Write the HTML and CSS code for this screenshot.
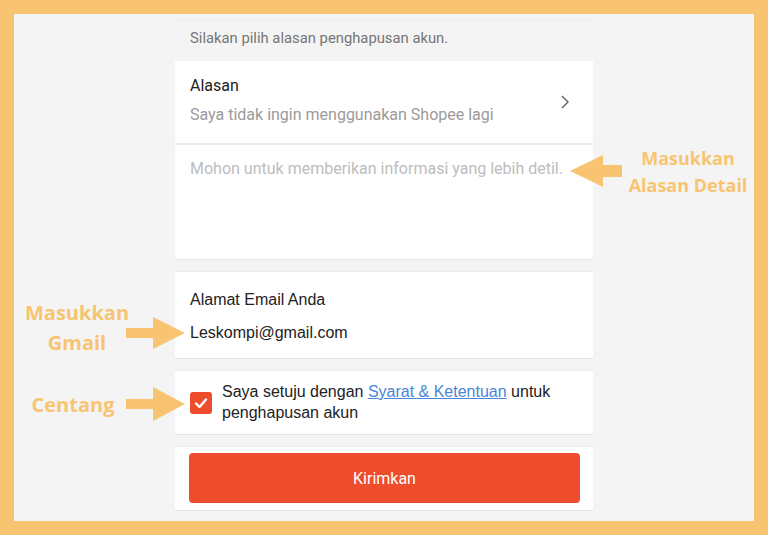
FILE: index.html
```html
<!DOCTYPE html>
<html lang="id">
<head>
<meta charset="utf-8">
<title>Hapus Akun</title>
<link rel="stylesheet" href="styles.css">
</head>
<body>
<div class="stage">
  <div class="frame">
    <div class="panel">
      <div class="hint">Silakan pilih alasan penghapusan akun.</div>
      <div class="card reason">
        <div class="reason-text">
          <div class="label">Alasan</div>
          <div class="value">Saya tidak ingin menggunakan Shopee lagi</div>
        </div>
        <svg class="chevron" width="12" height="16" viewBox="0 0 12 16"><polyline points="3,2 9,8 3,14" fill="none" stroke="#5f5f66" stroke-width="1.4"/></svg>
      </div>
      <div class="card detail">
        <div class="placeholder">Mohon untuk memberikan informasi yang lebih detil.</div>
      </div>
      <div class="card email">
        <div class="email-label">Alamat Email Anda</div>
        <div class="email-value">Leskompi@gmail.com</div>
      </div>
      <div class="card agree">
        <span class="checkbox"><svg width="22" height="22" viewBox="0 0 22 22"><polyline points="6,11.5 9.5,15 16,7.5" fill="none" stroke="#fff" stroke-width="2.4" stroke-linecap="round" stroke-linejoin="round"/></svg></span>
        <div class="agree-text">
          <div class="agree-line">Saya setuju dengan <a class="link" href="#">Syarat &amp; Ketentuan</a> untuk</div>
          <div class="agree-line">penghapusan akun</div>
        </div>
      </div>
      <div class="card submit">
        <button class="btn">Kirimkan</button>
      </div>
    </div>
  </div>

  <svg class="arrows" width="768" height="535" viewBox="0 0 768 535">
    <polygon points="570,171 603,155 603,165 622,165 622,177 603,177 603,187" fill="#f8c471"/>
    <polygon points="185,333 153,317 153,328 126,328 126,338 153,338 153,349" fill="#f8c471"/>
    <polygon points="185,404 153,387 153,399 126,399 126,409 153,409 153,421" fill="#f8c471"/>
  </svg>
  <div class="note note-detail">Masukkan<br>Alasan Detail</div>
  <div class="note note-gmail">Masukkan<br>Gmail</div>
  <div class="note note-check">Centang</div>
</div>
</body>
</html>
```
FILE: styles.css
```css
* { box-sizing: border-box; }
html, body { margin: 0; padding: 0; }
body { background: #f8c471; }

.stage {
  position: relative;
  width: 768px;
  height: 535px;
  overflow: hidden;
}

.frame {
  width: 768px;
  height: 535px;
  border: 14px solid #f8c471;
  background: #f4f4f4;
}

.panel {
  width: 418px;
  margin-left: 161px;
  display: flex;
  flex-direction: column;
  font-family: Roboto, "Liberation Sans", sans-serif;
  font-size: 16px;
}

.hint {
  margin-top: 6px;
  border-top: 1px solid #ececec;
  height: 41px;
  padding: 6px 15px 0;
  line-height: 22px;
  font-size: 14.8px;
  color: #757575;
}

.card {
  background: #fff;
}

.reason {
  height: 82px;
  display: flex;
  align-items: center;
  justify-content: space-between;
  padding: 0 22px 0 15px;
}
.reason-text { display: flex; flex-direction: column; gap: 7px; margin-top: -4px; }
.label { line-height: 22px; color: #222; }
.value { line-height: 22px; color: #9b9b9b; }

.detail {
  height: 117px;
  border-top: 2px solid #ececec;
  border-bottom: 1px solid #e6e6e6;
  padding: 13px 15px 0;
}
.placeholder { line-height: 22px; color: #bdbdbd; }

.email {
  margin-top: 11px;
  height: 88px;
  border-top: 1px solid #ececec;
  border-bottom: 1px solid #e6e6e6;
  padding: 17px 15px 0;
  font-family: "Liberation Sans", Arial, sans-serif;
  color: #222;
  display: flex;
  flex-direction: column;
  gap: 11px;
}
.email-label, .email-value { line-height: 22px; }

.agree {
  margin-top: 11px;
  height: 65px;
  border-top: 1px solid #ececec;
  border-bottom: 1px solid #e6e6e6;
  padding: 0 15px;
  display: flex;
  align-items: center;
  gap: 10px;
  font-family: "Liberation Sans", Arial, sans-serif;
  color: #222;
}
.checkbox {
  flex: 0 0 22px;
  width: 22px;
  height: 22px;
  border-radius: 3px;
  background: #ee4d2d;
  display: flex;
  margin-top: 1px;
}
.agree-text {
  margin-top: -1px;
  line-height: 21px;
}
.agree-line { white-space: nowrap; }
.link { color: #4a84d6; text-decoration: underline; }

.submit {
  margin-top: 11px;
  height: 65px;
  border-top: 1px solid #ececec;
  border-bottom: 1px solid #e6e6e6;
  padding: 6px 13px 0 14px;
}
.btn {
  display: block;
  width: 100%;
  height: 50px;
  border: none;
  border-radius: 4px;
  background: #ee4d2d;
  color: #fff;
  font-family: Roboto, sans-serif;
  font-size: 16px;
}

.arrows {
  position: absolute;
  left: 0;
  top: 0;
}

.note {
  position: absolute;
  font-family: "Open Sans", sans-serif;
  font-weight: 700;
  color: #f8c471;
  text-align: center;
  white-space: nowrap;
}
.note-detail {
  left: 608px;
  top: 145px;
  width: 160px;
  font-size: 18px;
  line-height: 27px;
}
.note-gmail {
  left: 7px;
  top: 298px;
  width: 140px;
  font-size: 20px;
  line-height: 30px;
}
.note-check {
  left: 3px;
  top: 390px;
  width: 140px;
  font-size: 20px;
  line-height: 30px;
}
```
